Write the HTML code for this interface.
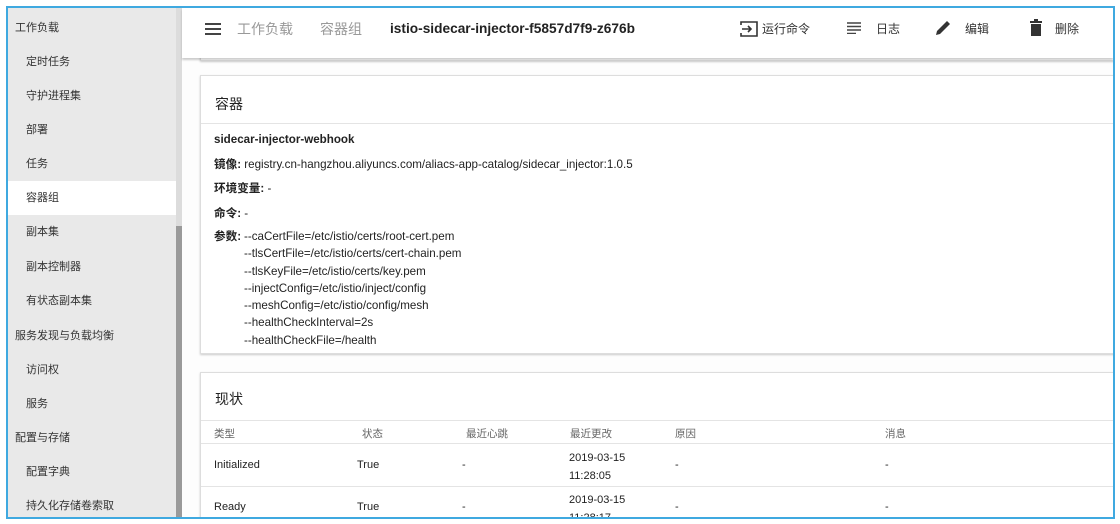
<!DOCTYPE html>
<html><head><meta charset="utf-8"><style>
*{margin:0;padding:0;box-sizing:border-box}
body{width:1120px;height:524px;background:#fff;font-family:"Liberation Sans","Noto Sans CJK SC",sans-serif;position:relative;overflow:hidden;color:#222}
.frame{position:absolute;left:6px;top:6px;width:1109px;height:513px;border:2px solid #3fa9e0;overflow:hidden;background:#fdfdfd}
.side{position:absolute;left:0;top:0;width:173px;height:520px;background:#e9e9e9}
.side div{position:absolute;font-size:11px;color:#333;line-height:14px}
.sel{position:absolute;left:0;top:173px;width:168px;height:34px;background:#fff}
.sb1{position:absolute;left:168px;top:0;width:6px;height:218px;background:#dcdcdc}
.sb2{position:absolute;left:168px;top:218px;width:6px;height:300px;background:#9a9a9a}
.a{position:absolute;white-space:nowrap}
.tb{position:absolute;left:174px;top:0;right:0;height:50px;background:#fff;box-shadow:0 2px 2px rgba(0,0,0,.2)}
.card{position:absolute;left:192px;right:-4px;background:#fff;border:1px solid #ddd;box-shadow:0 1px 2px rgba(0,0,0,.2)}
.hl{position:absolute;left:0;right:0;height:1px;background:#e4e4e4}
.t{font-size:11.6px;color:#222}
.t b{font-weight:600}
.g{font-size:10.5px;color:#666}
</style></head><body>
<div class="frame">
<div class="side">
<div class="sel"></div>
<div style="left:7px;top:13px">工作负载</div>
<div style="left:18px;top:47px">定时任务</div>
<div style="left:18px;top:81px">守护进程集</div>
<div style="left:18px;top:115px">部署</div>
<div style="left:18px;top:149px">任务</div>
<div style="left:18px;top:183px">容器组</div>
<div style="left:18px;top:217px">副本集</div>
<div style="left:18px;top:252px">副本控制器</div>
<div style="left:18px;top:286px">有状态副本集</div>
<div style="left:7px;top:321px">服务发现与负载均衡</div>
<div style="left:18px;top:355px">访问权</div>
<div style="left:18px;top:389px">服务</div>
<div style="left:7px;top:423px">配置与存储</div>
<div style="left:18px;top:457px">配置字典</div>
<div style="left:18px;top:491px">持久化存储卷索取</div>
<div class="sb1"></div><div class="sb2"></div>
</div>

<div class="card" style="top:-10px;height:63px"></div>
<div class="tb">
<svg class="a" style="left:22px;top:14px" width="18" height="14"><path d="M1 2h16M1 7h16M1 12h16" stroke="#444" stroke-width="2"/></svg>
<span class="a" style="left:55px;top:11px;font-size:14px;color:#999">工作负载</span>
<span class="a" style="left:138px;top:11px;font-size:14px;color:#999">容器组</span>
<span class="a" style="left:208px;top:13px;font-size:13.7px;font-weight:bold;color:#222">istio-sidecar-injector-f5857d7f9-z676b</span>
<svg class="a" style="left:557px;top:12px" width="20" height="18"><path d="M2 5V2h16v14H2v-3" fill="none" stroke="#333" stroke-width="1.6"/><path d="M3 9h9M9 6l3 3-3 3" fill="none" stroke="#333" stroke-width="1.6"/></svg>
<span class="a" style="left:580px;top:12px;font-size:12px;color:#333">运行命令</span>
<svg class="a" style="left:665px;top:14px" width="14" height="12"><path d="M0 1h14M0 4.5h14M0 8h14M0 11.5h9" stroke="#444" stroke-width="1.5"/></svg>
<span class="a" style="left:694px;top:12px;font-size:12px;color:#333">日志</span>
<svg class="a" style="left:752px;top:11px" width="18" height="18"><path d="M2 16l1-4L13 2l3 3L6 15z" fill="#333"/></svg>
<span class="a" style="left:783px;top:12px;font-size:12px;color:#333">编辑</span>
<svg class="a" style="left:848px;top:11px" width="12" height="17"><rect x="0" y="2" width="12" height="2" fill="#333"/><rect x="4" y="0" width="4" height="2" fill="#333"/><rect x="1" y="5" width="10" height="12" fill="#333"/></svg>
<span class="a" style="left:873px;top:12px;font-size:12px;color:#333">删除</span>
</div>

<div class="card" style="top:67px;height:279px">
<span class="a" style="left:14px;top:18px;font-size:14px">容器</span>
<div class="hl" style="top:47px"></div>
<span class="a t" style="left:13px;top:57px;font-weight:bold">sidecar-injector-webhook</span>
<span class="a t" style="left:13px;top:80px"><b>镜像:</b> registry.cn-hangzhou.aliyuncs.com/aliacs-app-catalog/sidecar_injector:1.0.5</span>
<span class="a t" style="left:13px;top:104px"><b>环境变量:</b> -</span>
<span class="a t" style="left:13px;top:129px"><b>命令:</b> -</span>
<span class="a t" style="left:13px;top:152px"><b>参数:</b></span>
<div class="a t" style="left:43px;top:152px;line-height:17.3px">--caCertFile=/etc/istio/certs/root-cert.pem<br>--tlsCertFile=/etc/istio/certs/cert-chain.pem<br>--tlsKeyFile=/etc/istio/certs/key.pem<br>--injectConfig=/etc/istio/inject/config<br>--meshConfig=/etc/istio/config/mesh<br>--healthCheckInterval=2s<br>--healthCheckFile=/health</div>
</div>

<div class="card" style="top:364px;height:170px">
<span class="a" style="left:14px;top:16px;font-size:14px">现状</span>
<div class="hl" style="top:47px"></div>
<span class="a g" style="left:13px;top:53px">类型</span>
<span class="a g" style="left:161px;top:53px">状态</span>
<span class="a g" style="left:265px;top:53px">最近心跳</span>
<span class="a g" style="left:369px;top:53px">最近更改</span>
<span class="a g" style="left:474px;top:53px">原因</span>
<span class="a g" style="left:684px;top:53px">消息</span>
<div class="hl" style="top:70px"></div>
<span class="a" style="left:13px;top:86px;font-size:11px">Initialized</span>
<span class="a" style="left:156px;top:86px;font-size:11px">True</span>
<span class="a" style="left:261px;top:86px;font-size:11px">-</span>
<span class="a" style="left:368px;top:76px;font-size:11px;line-height:18px">2019-03-15<br>11:28:05</span>
<span class="a" style="left:474px;top:86px;font-size:11px">-</span>
<span class="a" style="left:684px;top:86px;font-size:11px">-</span>
<div class="hl" style="top:113px"></div>
<span class="a" style="left:13px;top:128px;font-size:11px">Ready</span>
<span class="a" style="left:156px;top:128px;font-size:11px">True</span>
<span class="a" style="left:261px;top:128px;font-size:11px">-</span>
<span class="a" style="left:368px;top:118px;font-size:11px;line-height:18px">2019-03-15<br>11:28:17</span>
<span class="a" style="left:474px;top:128px;font-size:11px">-</span>
<span class="a" style="left:684px;top:128px;font-size:11px">-</span>
</div>
</div>
</body></html>
